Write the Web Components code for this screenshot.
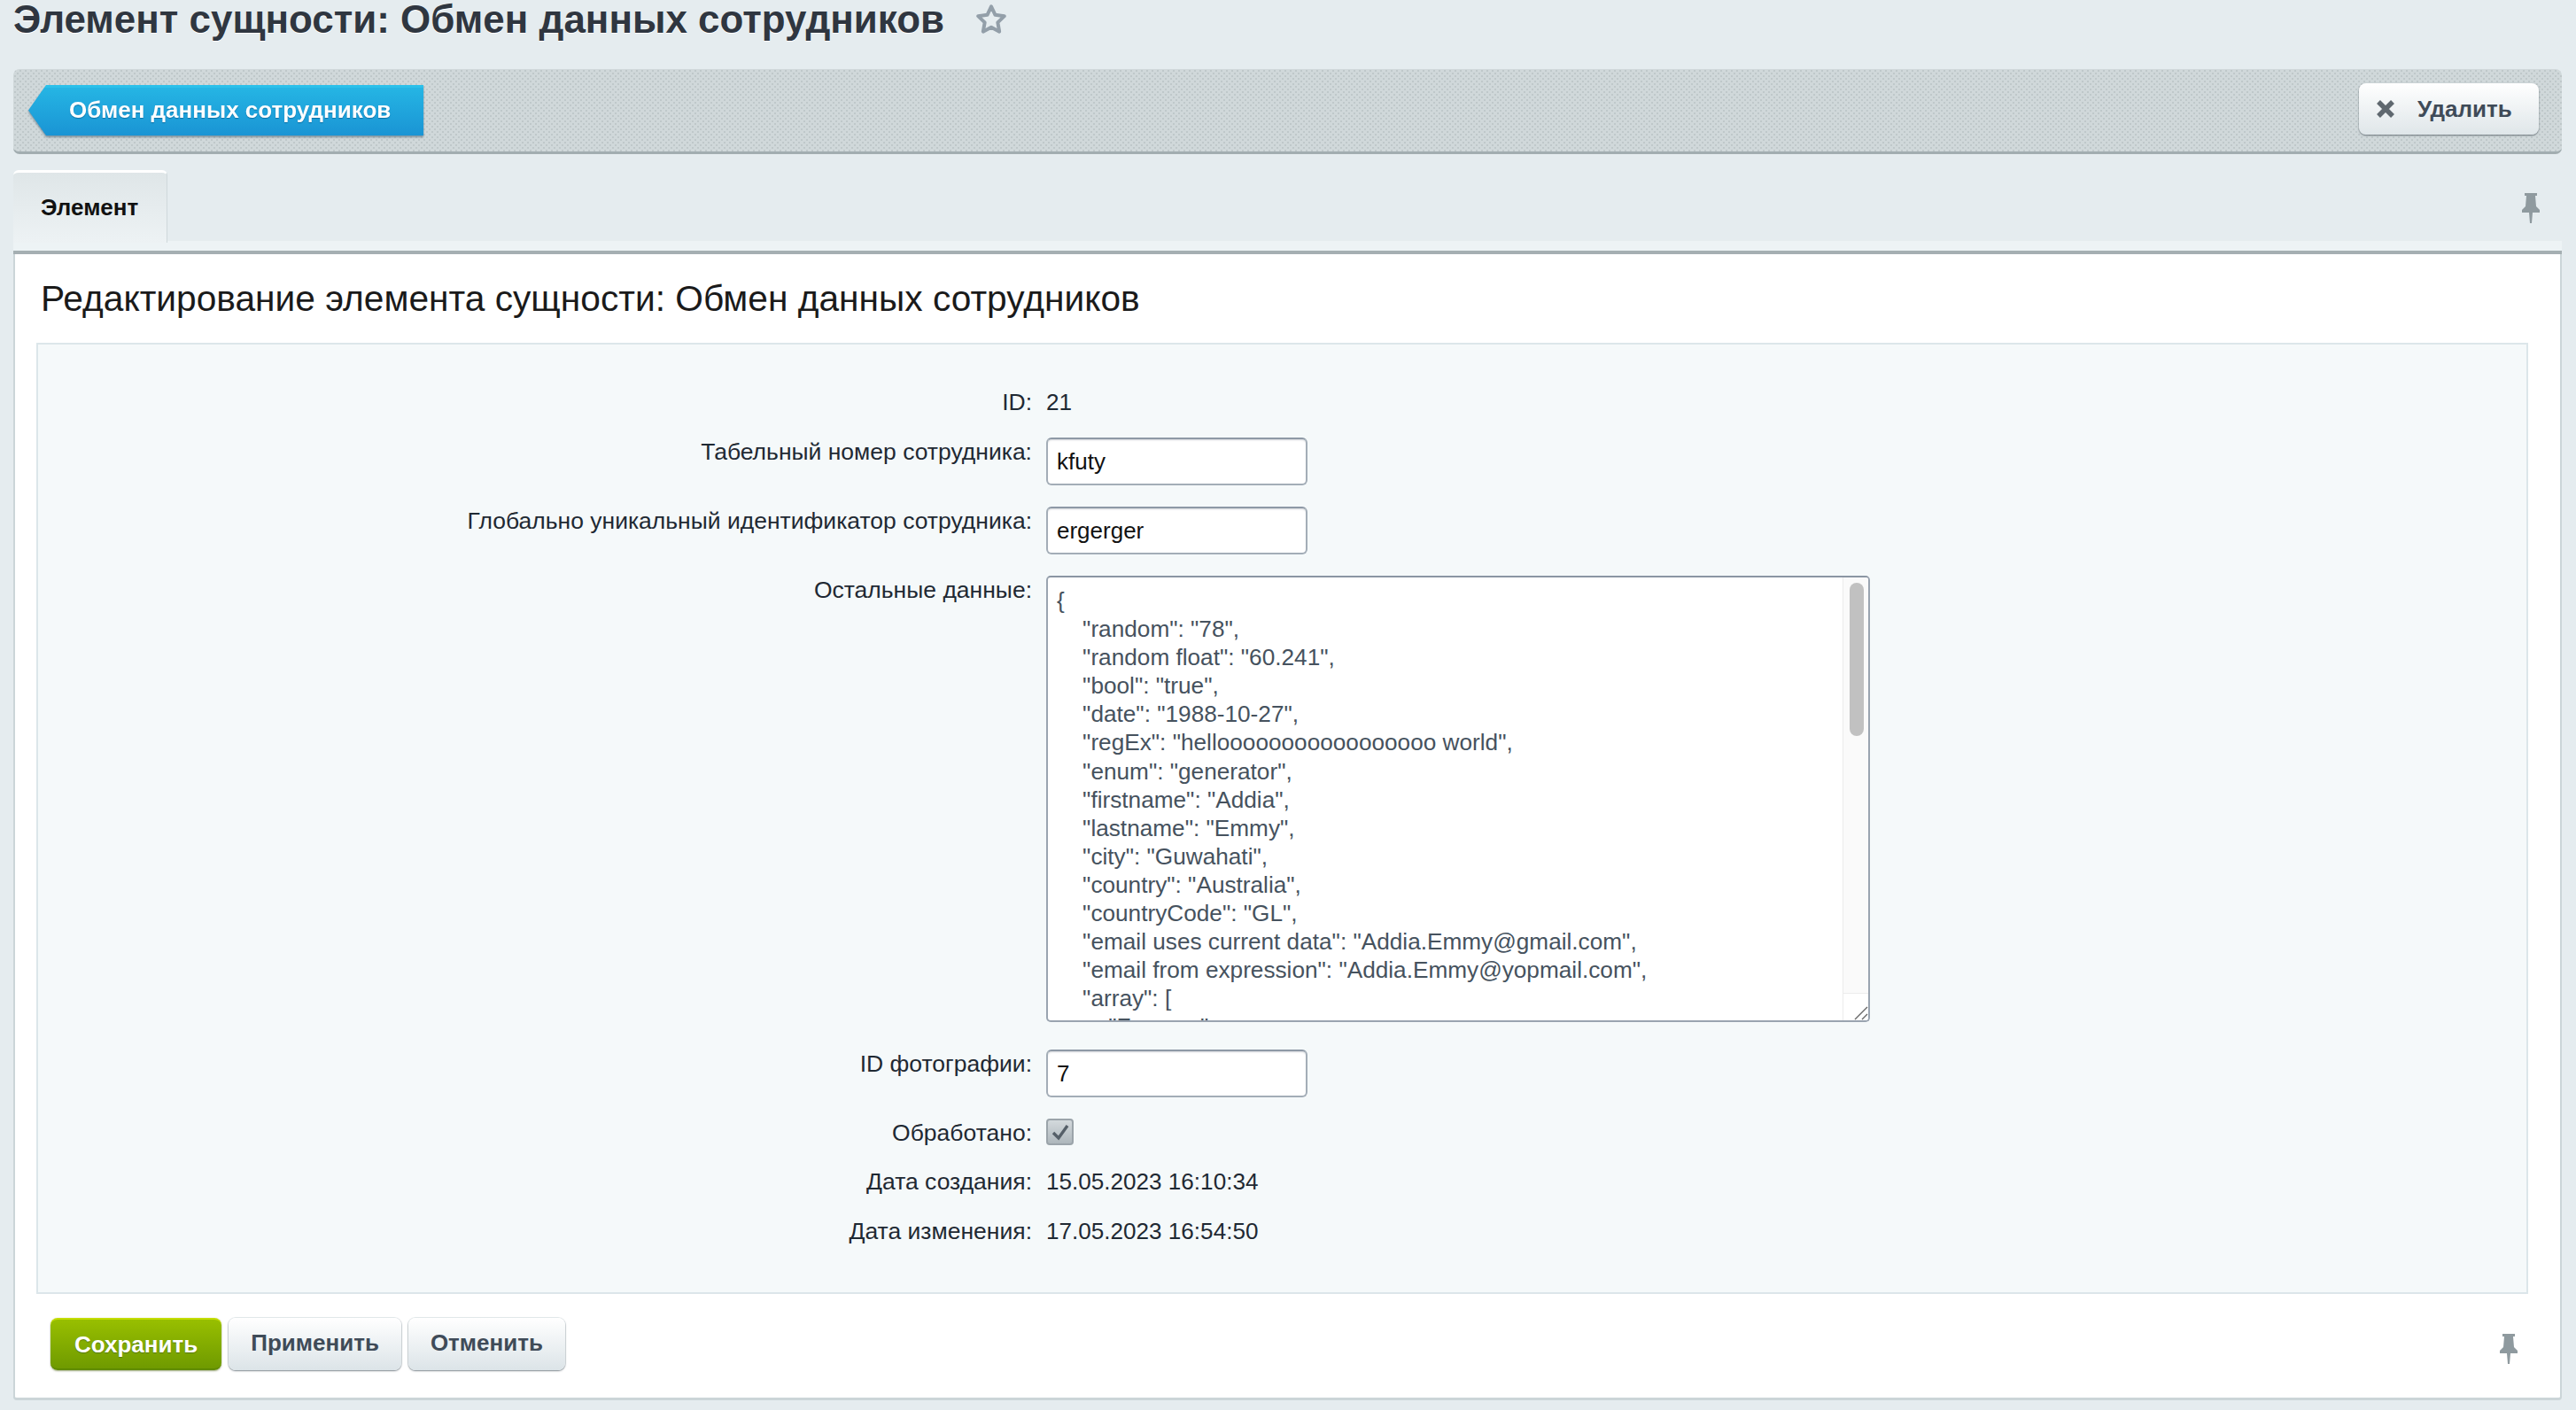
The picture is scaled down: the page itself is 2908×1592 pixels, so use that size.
<!DOCTYPE html>
<html lang="ru">
<head>
<meta charset="utf-8">
<title>Элемент сущности</title>
<style>
	html, body { margin: 0; padding: 0; }
	body {
		width: 2908px;
		height: 1592px;
		overflow: hidden;
		background: #e5ecef;
		font-family: "Liberation Sans", Arial, sans-serif;
		color: #000;
	}
</style>
</head>
<body>
<admin-page>
	<page-title slot="title">Элемент сущности: Обмен данных сотрудников</page-title>
	<context-bar slot="bar">
		<back-button slot="left">Обмен данных сотрудников</back-button>
		<delete-button slot="right">Удалить</delete-button>
	</context-bar>
	<tab-strip slot="tabs">Элемент</tab-strip>
	<edit-panel slot="panel" heading="Редактирование элемента сущности: Обмен данных сотрудников">
		<form-row label="ID:" height="58" label-top="1" value-top="1"><span>21</span></form-row>
		<form-row label="Табельный номер сотрудника:" height="78" label-top="-1"><text-box>kfuty</text-box></form-row>
		<form-row label="Глобально уникальный идентификатор сотрудника:" height="78" label-top="-1"><text-box>ergerger</text-box></form-row>
		<form-row label="Остальные данные:" height="535" label-top="-1"><json-box></json-box></form-row>
		<form-row label="ID фотографии:" height="78" label-top="-1"><text-box>7</text-box></form-row>
		<form-row label="Обработано:" height="53" label-top="-1"><check-box></check-box></form-row>
		<form-row label="Дата создания:" height="56" label-top="1" value-top="1"><span>15.05.2023 16:10:34</span></form-row>
		<form-row label="Дата изменения:" height="55" label-top="1" value-top="1"><span>17.05.2023 16:54:50</span></form-row>
		<action-button slot="actions" kind="save">Сохранить</action-button>
		<action-button slot="actions">Применить</action-button>
		<action-button slot="actions">Отменить</action-button>
	</edit-panel>
</admin-page>

<script>
(function() {
	const PIN = `<svg width="22" height="34" viewBox="0 0 22 34">
		<path d="M4 0h14v3h-2l1 12 4 4v3H13l-1 12h-2L9 22H1v-3l4-4L6 3H4z" fill="#8f9a9f"/>
	</svg>`;

	class AdminPage extends HTMLElement {
		constructor() {
			super();
			this.attachShadow({mode: 'open'}).innerHTML = `<style>
					:host { display: block; padding: 0 16px 0 15px; }
					.bar { margin-top: 34px; }
					.tabs { margin-top: 18px; }
				</style>
				<slot name="title"></slot>
				<div class="bar"><slot name="bar"></slot></div>
				<div class="tabs"><slot name="tabs"></slot></div>
				<slot name="panel"></slot>`;
		}
	}

	class PageTitle extends HTMLElement {
		constructor() {
			super();
			this.attachShadow({mode: 'open'}).innerHTML = `<style>
					:host { display: flex; align-items: center; height: 44px; font: bold 43.95px/44px "Liberation Sans", Arial, sans-serif; color: #2f3640; text-shadow: 0 1px 0 #fff; white-space: nowrap; }
					svg { margin-left: 33px; }
				</style>
				<slot></slot>
				<svg width="40" height="40" viewBox="0 0 24 24"><path d="M12 3.2l2.7 5.7 6.2.8-4.5 4.3 1.1 6.2-5.5-3-5.5 3 1.1-6.2-4.5-4.3 6.2-.8z" fill="#e6edf0" stroke="#939fa9" stroke-width="2.4" stroke-linejoin="round"/></svg>`;
		}
	}

	class ContextBar extends HTMLElement {
		constructor() {
			super();
			this.attachShadow({mode: 'open'}).innerHTML = `<style>
					:host {
						display: flex; justify-content: space-between; align-items: flex-start; box-sizing: border-box;
						height: 96px; padding: 18px 26px 0 17px; border-radius: 7px;
						border-bottom: 3px solid #a2adb0;
						background-color: #d0d8da;
						background-image: radial-gradient(circle at 2px 2px, #bfc8ca 1.2px, transparent 1.4px), radial-gradient(circle at 5px 5px, #bfc8ca 1.2px, transparent 1.4px);
						background-size: 6px 6px;
					}
				</style>
				<slot name="left"></slot>
				<slot name="right"></slot>`;
		}
	}

	class BackButton extends HTMLElement {
		constructor() {
			super();
			this.attachShadow({mode: 'open'}).innerHTML = `<style>
					:host { display: block; filter: drop-shadow(0 2px 1px rgba(60,90,110,.55)); }
					.btn {
						box-sizing: border-box; width: 446px; height: 57px; padding-left: 46px;
						font: bold 26px/57px "Liberation Sans", Arial, sans-serif; color: #fff;
						text-shadow: 0 1px 1px rgba(0,80,130,.6);
						background: linear-gradient(#2bc0ea 0, #2bc0ea 3px, #25b5e4 3px, #1a94d4);
						clip-path: polygon(0 50%, 20px 0, 100% 0, 100% 100%, 20px 100%);
						white-space: nowrap;
					}
				</style>
				<div class="btn"><slot></slot></div>`;
		}
	}

	class DeleteButton extends HTMLElement {
		constructor() {
			super();
			this.attachShadow({mode: 'open'}).innerHTML = `<style>
					:host {
						display: flex; align-items: center; box-sizing: border-box; width: 203px; height: 58px; padding-left: 19px; margin-top: -2px;
						border-radius: 8px; background: linear-gradient(#fff, #dfe6e9);
						box-shadow: 0 1px 2px rgba(60,70,80,.7);
						font: bold 26px "Liberation Sans", Arial, sans-serif; color: #3f4b58;
					}
					svg { margin-right: 25px; }
				</style>
				<svg width="22" height="22" viewBox="0 0 22 22"><path d="M3 3l16 16M19 3L3 19" stroke="#5f686f" stroke-width="5.5"/></svg>
				<slot></slot>`;
		}
	}

	class TabStrip extends HTMLElement {
		constructor() {
			super();
			this.attachShadow({mode: 'open'}).innerHTML = `<style>
					:host {
						display: flex; justify-content: space-between; box-sizing: border-box; height: 95px;
						border-bottom: 4px solid #a5afb2;
						background: linear-gradient(to bottom, transparent 80px, #edf3f5 80px);
					}
					.tab {
						box-sizing: border-box; width: 174px; height: 82px; padding-left: 31px;
						border-top: 3px solid #fff; border-right: 1px solid #cfd8db; border-radius: 6px 6px 0 0;
						background: linear-gradient(#dfe6e8, #edf2f4);
						font: bold 26px/78px "Liberation Sans", Arial, sans-serif; color: #111;
					}
					.pin { margin: 26px 24px 0 0; }
				</style>
				<div class="tab"><slot></slot></div>
				<div class="pin">${PIN}</div>`;
		}
	}

	class EditPanel extends HTMLElement {
		constructor() {
			super();
			this.attachShadow({mode: 'open'}).innerHTML = `<style>
					:host {
						display: block; box-sizing: border-box; height: 1294px; padding: 0 36px 0 24px;
						background: #fff; border: solid #cbd5d8; border-width: 0 2px 3px 2px; border-radius: 0 0 4px 4px;
					}
					h2 { margin: 0; height: 100px; font: normal 40.7px/101px "Liberation Sans", Arial, sans-serif; color: #1a1a1a; padding-left: 5px; white-space: nowrap; }
					.form { box-sizing: border-box; height: 1074px; padding-top: 47px; background: #f5f9fa; border: 2px solid #dce6ea; }
					.actions { display: flex; gap: 8px; padding: 27px 0 0 16px; }
					.pin { margin-left: auto; margin-right: 11px; padding-top: 18px; }
				</style>
				<h2 id="h"></h2>
				<div class="form"><slot></slot></div>
				<div class="actions"><slot name="actions"></slot><div class="pin">${PIN}</div></div>`;
			this.shadowRoot.getElementById('h').textContent = this.getAttribute('heading');
		}
	}

	class FormRow extends HTMLElement {
		constructor() {
			super();
			this.attachShadow({mode: 'open'}).innerHTML = `<style>
					:host { display: grid; grid-template-columns: 1122px 1fr; column-gap: 16px; font: 26.1px/34px "Liberation Sans", Arial, sans-serif; color: #1f2933; }
					.label { font-size: 26.5px; text-align: right; white-space: nowrap; }
				</style>
				<div class="label" id="l"></div>
				<div id="v"><slot></slot></div>`;
			const label = this.shadowRoot.getElementById('l');
			label.textContent = this.getAttribute('label');
			label.style.marginTop = this.getAttribute('label-top') + 'px';
			this.shadowRoot.getElementById('v').style.marginTop = (this.getAttribute('value-top') || 0) + 'px';
			this.style.height = this.getAttribute('height') + 'px';
		}
	}

	class TextBox extends HTMLElement {
		constructor() {
			super();
			this.attachShadow({mode: 'open'}).innerHTML = `<style>
					:host {
						display: block; box-sizing: border-box; width: 295px; height: 54px; padding: 9px 10px;
						background: #fff; border: 2px solid #a3adb7; border-top-color: #8e99a6; border-radius: 6px;
						box-shadow: inset 0 2px 2px -1px rgba(120,130,140,.35);
						font: 26px/33px "Liberation Sans", Arial, sans-serif; color: #111;
					}
				</style><slot></slot>`;
		}
	}

	class JsonBox extends HTMLElement {
		constructor() {
			super();
			const lines = ['{', '    "random": "78",', '    "random float": "60.241",', '    "bool": "true",', '    "date": "1988-10-27",',
				'    "regEx": "hell' + 'o'.repeat(17) + ' world",', '    "enum": "generator",', '    "firstname": "Addia",', '    "lastname": "Emmy",',
				'    "city": "Guwahati",', '    "country": "Australia",', '    "countryCode": "GL",', '    "email uses current data": "Addia.Emmy@gmail.com",',
				'    "email from expression": "Addia.Emmy@yopmail.com",', '    "array": [', '        "Frances",'];
			this.attachShadow({mode: 'open'}).innerHTML = `<style>
					:host {
						display: block; position: relative; box-sizing: border-box; width: 930px; height: 504px; overflow: hidden;
						background: #fff; border: 2px solid #9aa4b0; border-top-color: #8b96a3; border-radius: 5px;
					}
					pre { margin: 0; padding: 10px 10px; font: 26.2px/32.1px "Liberation Sans", Arial, sans-serif; color: #46525e; white-space: pre; }
					.track { position: absolute; right: 0; top: 0; bottom: 0; width: 28px; background: #fafafa; border-left: 1px solid #ececec; }
					.thumb { position: absolute; left: 7px; top: 6px; width: 16px; height: 173px; border-radius: 8px; background: #c1c1c1; }
					.corner { position: absolute; right: 0; bottom: 0; width: 28px; height: 30px; background: #fff; border-top: 1px solid #ececec; }
					.corner svg { position: absolute; right: 0; bottom: 0; }
				</style>
				<pre id="p"></pre>
				<div class="track"><div class="thumb"></div></div>
				<div class="corner"><svg width="18" height="18" viewBox="0 0 18 18"><path d="M3 17L17 3M11 17l6-6" stroke="#666" stroke-width="1.4" fill="none"/></svg></div>`;
			this.shadowRoot.getElementById('p').textContent = lines.join('\n');
		}
	}

	class CheckBox extends HTMLElement {
		constructor() {
			super();
			this.attachShadow({mode: 'open'}).innerHTML = `<style>
					:host {
						display: flex; align-items: center; justify-content: center; box-sizing: border-box; width: 31px; height: 30px;
						border: 2px solid #9ba4aa; border-radius: 4px; background: linear-gradient(#d3d9dc, #aeb7bc);
					}
				</style>
				<svg width="22" height="20" viewBox="0 0 22 20"><path d="M3 11l6 6L19 3" fill="none" stroke="#555f68" stroke-width="3.4"/></svg>`;
		}
	}

	class ActionButton extends HTMLElement {
		constructor() {
			super();
			const save = this.getAttribute('kind') === 'save';
			this.attachShadow({mode: 'open'}).innerHTML = `<style>
					:host {
						display: block; box-sizing: border-box; height: 59px; padding: 0 25px; border-radius: 8px;
						font: bold 26px/57px "Liberation Sans", Arial, sans-serif; white-space: nowrap;
						${save ? `color: #fff; background: linear-gradient(#98bf00, #6f9a00); border-top: 2px solid #c3dc00; border-bottom: 2px solid #5f8a00; text-shadow: 0 1px 1px rgba(60,90,0,.6); padding: 0 27px; box-shadow: 0 1px 2px rgba(60,80,0,.5);`
						: `color: #3f4b58; background: linear-gradient(#fff, #dce4e8); box-shadow: 0 1px 2px rgba(60,70,80,.6), 0 0 0 1px #e8edef;`}
					}
				</style><slot></slot>`;
		}
	}

	function defineElements() {
		customElements.define('admin-page', AdminPage);
		customElements.define('page-title', PageTitle);
		customElements.define('context-bar', ContextBar);
		customElements.define('back-button', BackButton);
		customElements.define('delete-button', DeleteButton);
		customElements.define('tab-strip', TabStrip);
		customElements.define('edit-panel', EditPanel);
		customElements.define('form-row', FormRow);
		customElements.define('text-box', TextBox);
		customElements.define('json-box', JsonBox);
		customElements.define('check-box', CheckBox);
		customElements.define('action-button', ActionButton);
	}

	defineElements();
})();
</script>
</body>
</html>
